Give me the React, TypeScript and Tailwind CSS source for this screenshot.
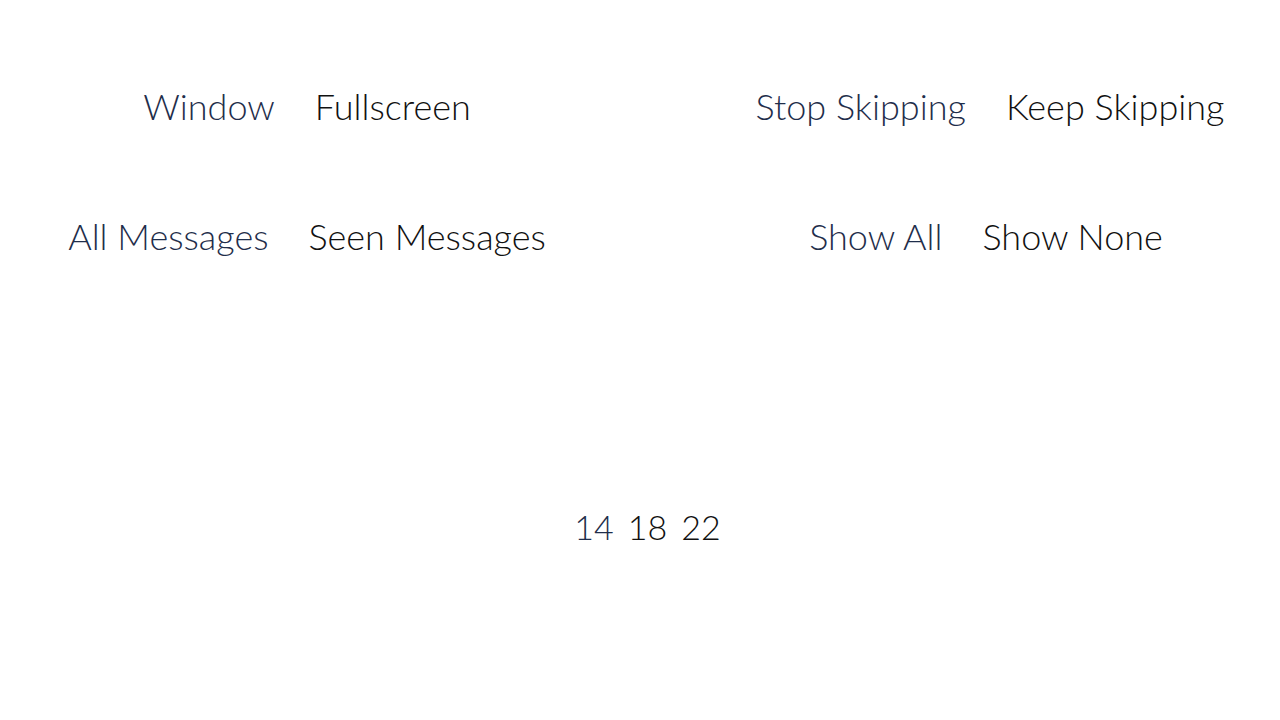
import React from "react";

const sel = "text-[#1f2e4b]";
const off = "text-[#111111]";

function Pair({ a, b, aSel = true }: { a: string; b: string; aSel?: boolean }) {
  return (
    <div className="flex items-end justify-center gap-10">
      <span className={`${aSel ? sel : off} text-[36px] font-light leading-none`}>{a}</span>
      <span className={`${aSel ? off : sel} text-[36px] font-light leading-none`}>{b}</span>
    </div>
  );
}

export default function App() {
  return (
    <div
      className="w-[1280px] h-[720px] bg-white overflow-hidden"
      style={{ fontFamily: "Lato, 'Open Sans', sans-serif" }}
    >
      <div className="pt-[88px] flex">
        <div className="w-[614px]">
          <Pair a="Window" b="Fullscreen" />
        </div>
        <div className="w-[580px] ml-[86px]">
          <Pair a="Stop Skipping" b="Keep Skipping" />
        </div>
      </div>
      <div className="pt-[94px] flex">
        <div className="w-[614px]">
          <Pair a="All Messages" b="Seen Messages" />
        </div>
        <div className="w-[572px] ml-[86px]">
          <Pair a="Show All" b="Show None" />
        </div>
      </div>
      <div className="pt-[256px] flex justify-center pl-[15px] gap-[14px]">
        <span className={`${sel} text-[34px] font-light leading-none`}>14</span>
        <span className={`${off} text-[34px] font-light leading-none`}>18</span>
        <span className={`${off} text-[34px] font-light leading-none`}>22</span>
      </div>
    </div>
  );
}
